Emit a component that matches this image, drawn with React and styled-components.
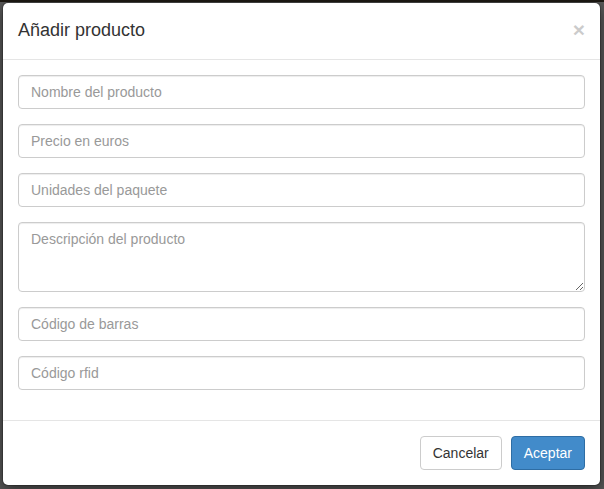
import React, { useState } from "react";
import styled, { createGlobalStyle } from "styled-components";

const GlobalStyle = createGlobalStyle`
  * { box-sizing: border-box; }
  body {
    margin: 0;
    background: linear-gradient(#1d1913 0, #1d1913 2px, #5a5a5a 2px);
    font-family: "Liberation Sans", Arial, Helvetica, sans-serif;
    font-size: 14px;
    color: #333;
    min-height: 489px;
  }
`;

const Backdrop = styled.div`
  padding: 2px 3px 3px 2px;
`;

const Modal = styled.form`
  width: 599px;
  background: #fff;
  border: 1px solid rgba(0, 0, 0, 0.2);
  border-radius: 6px;
  box-shadow: 0 5px 15px rgba(0, 0, 0, 0.5);
  background-clip: padding-box;
`;

const Header = styled.div`
  position: relative;
  padding: 15px;
  border-bottom: 1px solid #e5e5e5;
`;

const Title = styled.h4`
  margin: 0;
  font-size: 18px;
  font-weight: 500;
  line-height: 1.42857143;
`;

const Close = styled.button`
  position: absolute;
  top: 16px;
  right: 15px;
  padding: 0;
  background: transparent;
  border: 0;
  font-family: inherit;
  font-size: 21px;
  font-weight: bold;
  line-height: 1;
  color: #000;
  opacity: 0.2;
  cursor: pointer;
`;

const Body = styled.div`
  padding: 15px;
`;

const Group = styled.div`
  margin-bottom: 15px;
`;

const Input = styled.input`
  display: block;
  width: 100%;
  height: 34px;
  padding: 6px 12px;
  font-family: inherit;
  font-size: 14px;
  line-height: 1.42857143;
  color: #555;
  background: #fff;
  border: 1px solid #ccc;
  border-radius: 4px;
  box-shadow: inset 0 1px 1px rgba(0, 0, 0, 0.075);
  &::placeholder { color: #999; }
  &:focus { outline: none; border-color: #66afe9; }
`;

const TextArea = styled(Input).attrs({ as: "textarea" })`
  height: 70px;
  resize: vertical;
`;

const Footer = styled.div`
  display: flex;
  justify-content: flex-end;
  gap: 9px;
  padding: 15px;
  border-top: 1px solid #e5e5e5;
`;

const Button = styled.button`
  height: 34px;
  padding: 6px 12px;
  font-family: inherit;
  font-size: 14px;
  line-height: 1.42857143;
  border-radius: 4px;
  border: 1px solid ${p => (p.$primary ? "#2e6da4" : "#ccc")};
  background: ${p => (p.$primary ? "#428bca" : "#fff")};
  color: ${p => (p.$primary ? "#fff" : "#333")};
  cursor: pointer;
`;

const fields = [
  { name: "nombre", placeholder: "Nombre del producto" },
  { name: "precio", placeholder: "Precio en euros" },
  { name: "unidades", placeholder: "Unidades del paquete" },
  { name: "descripcion", placeholder: "Descripción del producto", area: true },
  { name: "barras", placeholder: "Código de barras" },
  { name: "rfid", placeholder: "Código rfid" },
];

const App = () => {
  const [product, setProduct] = useState({});

  const handleChange = event => {
    setProduct({ ...product, [event.target.name]: event.target.value });
  };

  return (
    <Backdrop>
      <GlobalStyle />
      <Modal onSubmit={e => e.preventDefault()}>
        <Header>
          <Title>Añadir producto</Title>
          <Close type="button">×</Close>
        </Header>
        <Body>
          {fields.map(f => (
            <Group key={f.name}>
              {f.area ? (
                <TextArea name={f.name} placeholder={f.placeholder} onChange={handleChange} value={product[f.name] || ""} />
              ) : (
                <Input type="text" name={f.name} placeholder={f.placeholder} onChange={handleChange} value={product[f.name] || ""} />
              )}
            </Group>
          ))}
        </Body>
        <Footer>
          <Button type="button">Cancelar</Button>
          <Button type="submit" $primary>Aceptar</Button>
        </Footer>
      </Modal>
    </Backdrop>
  );
};

export default App;
